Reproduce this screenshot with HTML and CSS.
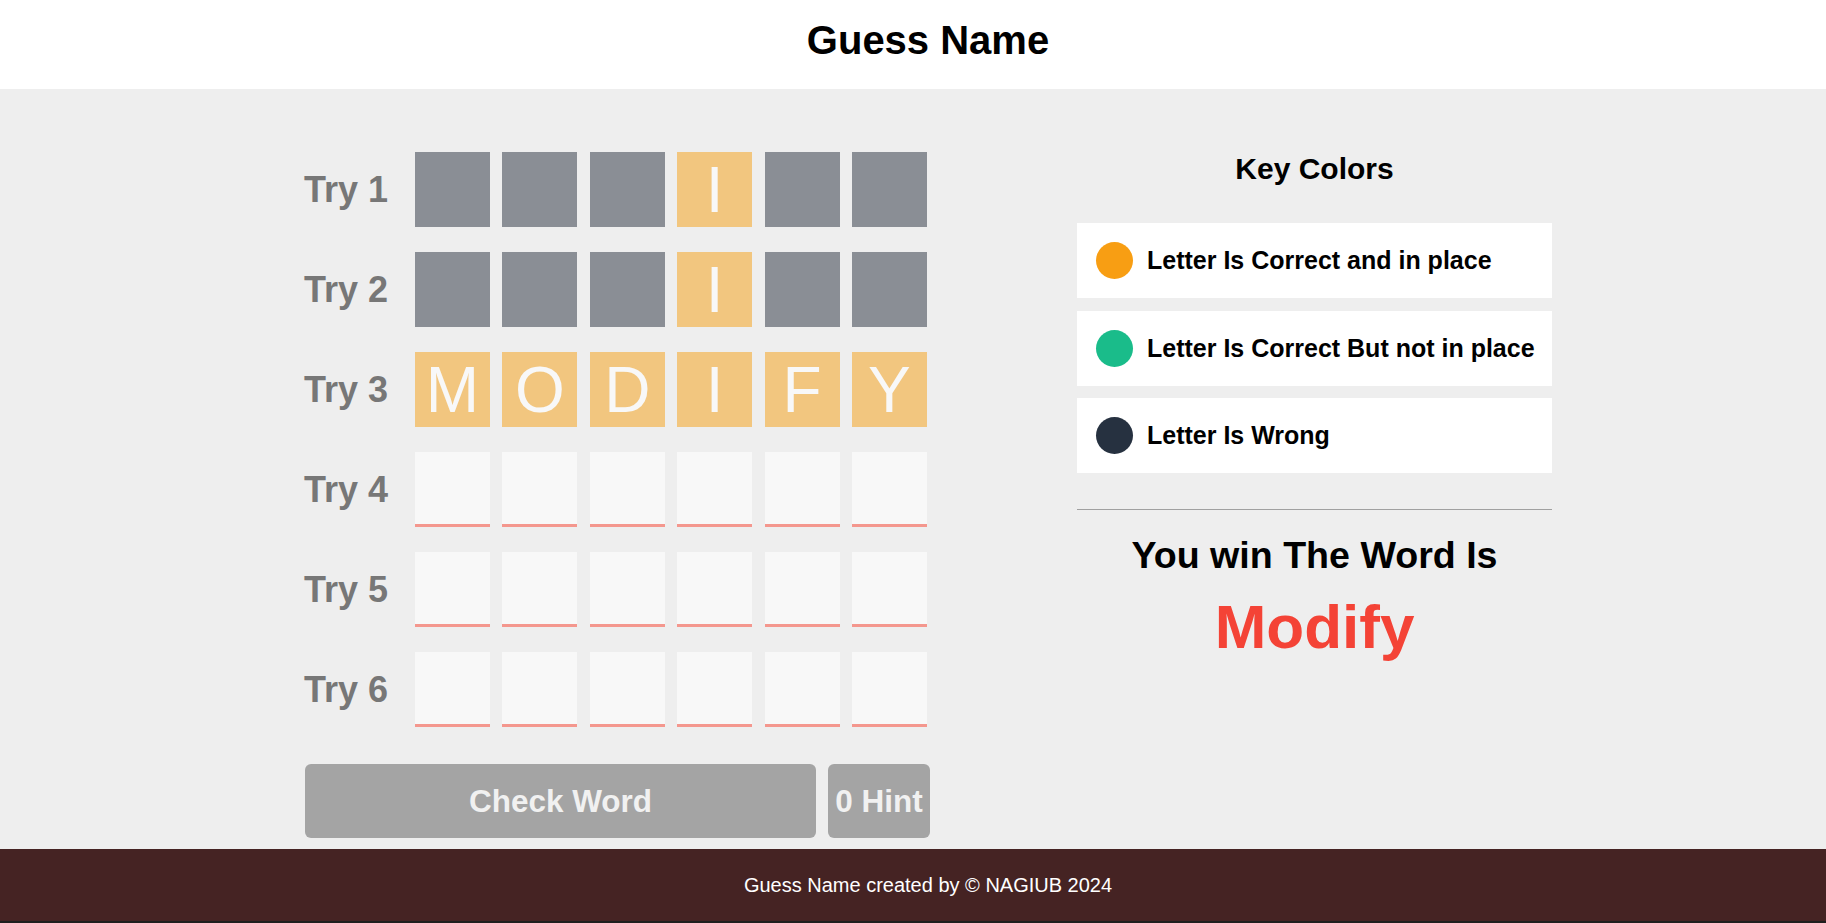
FILE: index.html
```html
<!DOCTYPE html>
<html lang="en">
<head>
<meta charset="utf-8">
<title>Guess Name</title>
<link rel="stylesheet" href="styles.css">
</head>
<body>
<div class="page">
  <header class="top">
    <h1 class="title">Guess Name</h1>
  </header>
  <main class="game">
    <section class="board">
      <div class="row">
        <span class="label">Try 1</span>
        <div class="tiles">
          <span class="tile wrong"></span><span class="tile wrong"></span><span class="tile wrong"></span><span class="tile hit">I</span><span class="tile wrong"></span><span class="tile wrong"></span>
        </div>
      </div>
      <div class="row">
        <span class="label">Try 2</span>
        <div class="tiles">
          <span class="tile wrong"></span><span class="tile wrong"></span><span class="tile wrong"></span><span class="tile hit">I</span><span class="tile wrong"></span><span class="tile wrong"></span>
        </div>
      </div>
      <div class="row">
        <span class="label">Try 3</span>
        <div class="tiles">
          <span class="tile hit">M</span><span class="tile hit">O</span><span class="tile hit">D</span><span class="tile hit">I</span><span class="tile hit">F</span><span class="tile hit">Y</span>
        </div>
      </div>
      <div class="row">
        <span class="label">Try 4</span>
        <div class="tiles">
          <span class="tile empty"></span><span class="tile empty"></span><span class="tile empty"></span><span class="tile empty"></span><span class="tile empty"></span><span class="tile empty"></span>
        </div>
      </div>
      <div class="row">
        <span class="label">Try 5</span>
        <div class="tiles">
          <span class="tile empty"></span><span class="tile empty"></span><span class="tile empty"></span><span class="tile empty"></span><span class="tile empty"></span><span class="tile empty"></span>
        </div>
      </div>
      <div class="row">
        <span class="label">Try 6</span>
        <div class="tiles">
          <span class="tile empty"></span><span class="tile empty"></span><span class="tile empty"></span><span class="tile empty"></span><span class="tile empty"></span><span class="tile empty"></span>
        </div>
      </div>
      <div class="actions">
        <button class="btn check">Check Word</button>
        <button class="btn hint">0 Hint</button>
      </div>
    </section>
    <aside class="side">
      <h2 class="key-title">Key Colors</h2>
      <ul class="keys">
        <li class="key"><span class="dot orange"></span><span class="key-text">Letter Is Correct and in place</span></li>
        <li class="key"><span class="dot green"></span><span class="key-text">Letter Is Correct But not in place</span></li>
        <li class="key"><span class="dot dark"></span><span class="key-text">Letter Is Wrong</span></li>
      </ul>
      <hr class="sep">
      <p class="win">You win The Word Is</p>
      <p class="word">Modify</p>
    </aside>
  </main>
  <footer class="foot">Guess Name created by © NAGIUB 2024</footer>
</div>
</body>
</html>
```

FILE: styles.css
```css
html {
  overflow-x: hidden;
}
body {
  margin: 0;
  font-family: "Liberation Sans", Arial, sans-serif;
  background: #eeeeee;
}
.page {
  min-width: 1856px;
}
.top {
  background: #ffffff;
  height: 89px;
  box-sizing: border-box;
  padding-top: 18px;
  text-align: center;
}
.title {
  margin: 0;
  font-size: 40px;
  font-weight: bold;
  line-height: normal;
  color: #000;
}
.game {
  display: flex;
  justify-content: center;
  align-items: flex-start;
  gap: 147px;
  padding: 63px 0 11px;
  background: #eeeeee;
}
.board {
  width: 626px;
  display: flex;
  flex-direction: column;
  gap: 25px;
}
.row {
  display: flex;
  align-items: center;
  height: 75px;
}
.label {
  width: 111px;
  font-size: 36px;
  font-weight: bold;
  color: #777777;
}
.tiles {
  display: flex;
  gap: 12.4px;
}
.tile {
  width: 75px;
  height: 75px;
  box-sizing: border-box;
  display: flex;
  align-items: center;
  justify-content: center;
  font-size: 64px;
  line-height: normal;
  color: #f8f8f8;
}
.wrong {
  background: #8a8e95;
}
.hit {
  background: #f2c67f;
}
.empty {
  background: #f8f8f8;
  border-bottom: 3px solid #f4978e;
}
.actions {
  display: flex;
  gap: 12px;
  margin-top: 12px;
  padding-left: 1px;
}
.btn {
  height: 74px;
  border: 0;
  border-radius: 6px;
  background: #a4a4a4;
  color: #f1f1f1;
  font-family: "Liberation Sans", Arial, sans-serif;
  font-size: 31.5px;
  font-weight: bold;
  padding: 0;
}
.check {
  width: 511px;
}
.hint {
  width: 102px;
}
.side {
  width: 475px;
  display: flex;
  flex-direction: column;
  align-items: stretch;
}
.key-title {
  margin: 0;
  font-size: 30px;
  font-weight: bold;
  line-height: normal;
  text-align: center;
  color: #000;
}
.keys {
  list-style: none;
  margin: 37px 0 0;
  padding: 0;
  display: flex;
  flex-direction: column;
  gap: 12.5px;
}
.key {
  height: 75px;
  background: #ffffff;
  display: flex;
  align-items: center;
  gap: 14px;
  padding-left: 19px;
}
.dot {
  width: 37px;
  height: 37px;
  border-radius: 50%;
  flex: none;
}
.orange {
  background: #f89e13;
}
.green {
  background: #1abc8a;
}
.dark {
  background: #263140;
}
.key-text {
  font-size: 25px;
  font-weight: bold;
  color: #000;
}
.sep {
  margin: 36px 0 0;
  border: 0;
  border-top: 1px solid #a0a0a0;
  height: 0;
}
.win {
  margin: 23.5px 0 0;
  font-size: 37.6px;
  font-weight: bold;
  line-height: normal;
  text-align: center;
  color: #000;
}
.word {
  margin: 14px 0 0;
  font-size: 62px;
  font-weight: bold;
  line-height: normal;
  text-align: center;
  color: #f44336;
}
.foot {
  height: 72px;
  background: #452323;
  border-bottom: 2px solid #1f1f1f;
  color: #ffffff;
  font-size: 20px;
  display: flex;
  align-items: center;
  justify-content: center;
}
```
